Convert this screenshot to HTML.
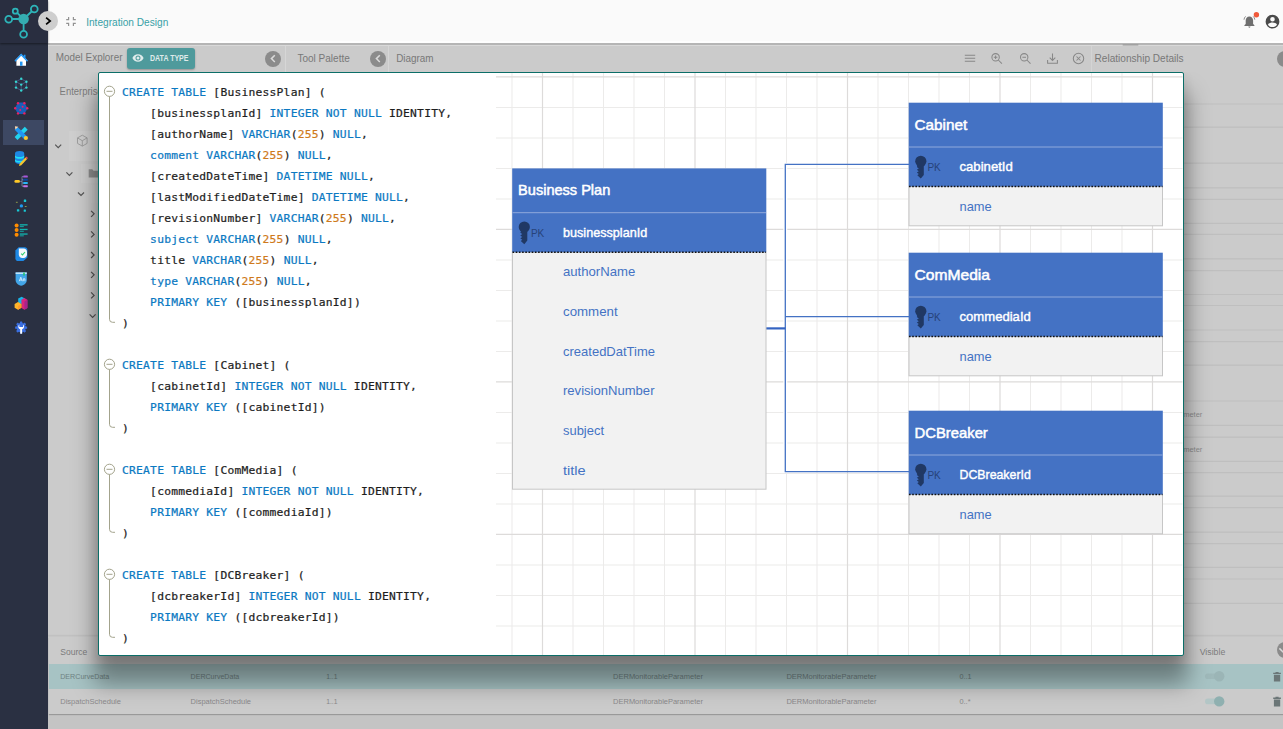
<!DOCTYPE html>
<html lang="en">
<head>
<meta charset="utf-8">
<title>Integration Design</title>
<style>
html,body{margin:0;padding:0}
body{width:1283px;height:729px;overflow:hidden;position:relative;background:#cbcbcb;font-family:"Liberation Sans",sans-serif;color:#777}
.abs{position:absolute}
/* sidebar */
#sidebar{position:absolute;left:0;top:0;width:48px;height:729px;background:#2a3042}
#logo{position:absolute;left:0;top:0;width:48px;height:43px;background:#292e40;box-shadow:0 1px 2px rgba(0,0,0,.45)}
#active{position:absolute;left:3px;top:120px;width:41px;height:25px;background:#3d4863}
/* header */
#header{position:absolute;left:48px;top:0;width:1235px;height:41px;background:#fafafa;border-bottom:2px solid #fefefe;box-shadow:0 2px 0 #b5b5b5,0 3px 0 #d9d9d9}
#toggle{position:absolute;left:38px;top:11px;width:20px;height:20px;border-radius:50%;background:#cecece}
/* content */
#bar{position:absolute;left:48px;top:44px;width:1235px;height:28px;background:#cbcbcb}
.circ{position:absolute;width:16px;height:16px;border-radius:50%;background:#8b8b8b}
/* modal */
#modal{position:absolute;left:98px;top:72px;width:1084px;height:582px;border:1px solid #0b6e68;border-radius:2px;background:#fff;box-shadow:0 24px 22px 4px rgba(0,0,0,.36),0 5px 12px 0 rgba(0,0,0,.12);overflow:hidden}
#code{position:absolute;left:23px;top:9.400px;margin:0;font-family:"DejaVu Sans Mono","Liberation Mono",monospace;font-size:11.3px;letter-spacing:.225px;line-height:21px;color:#1e1e1e;white-space:pre;-webkit-text-stroke:.22px}
#code b{font-weight:normal;color:#0b79c2}
#code i{font-style:normal;color:#cf7a1b}
</style>
</head>
<body>
<div id="content">
<div class="abs" style="left:48px;top:714px;width:1235px;height:15px;background:#c4c4c4"></div>
<div class="abs" style="left:69px;top:131px;width:40px;height:30px;background:#cfcfcf"></div>
<div class="abs" style="left:81px;top:164px;width:30px;height:19px;background:#cecece"></div>
<div class="abs" style="left:91px;top:185px;width:20px;height:18px;background:#cdcdcd"></div>
<div class="abs" style="left:49px;top:637px;width:1234px;height:77px;background:#cbcbcb;box-shadow:0 1px 1px rgba(0,0,0,.22)"></div>
<div class="abs" style="left:49px;top:664px;width:1234px;height:24.500px;background:#a7c3c4"></div>
</div>
<div class="circ" style="left:1276.600px;top:642.400px"></div>
<svg id="bgsvg" class="abs" style="left:0;top:0" width="1283" height="729" viewBox="0 0 1283 729" font-family="Liberation Sans, sans-serif">
<!-- left strip -->
<text x="59.600" y="95.200" font-size="10.400" fill="#7b7b7b" textLength="43" lengthAdjust="spacingAndGlyphs">Enterprise</text>
<g stroke="#9a9a9a" stroke-width=".9" fill="none"><path d="M82.300 135.200l4.800 2.700v5.500l-4.800 2.700-4.800-2.700v-5.500zM82.300 140.700l4.800-2.800M82.300 140.700l-4.800-2.800M82.300 140.700v5.400"/></g>
<path d="M88.700 169.300h3.600l1.200 1.400h6v6.700h-10.800z" fill="#8e8e8e"/>
<g stroke="#555" stroke-width="1.200" fill="none"><path d="M55.200 144.600l3 3 3-3M66.400 172.300l3 3 3-3M78 192.500l3 3 3-3M91.100 210.800l3 3-3 3M91.100 231.400l3 3-3 3M91.100 252l3 3-3 3M91.100 271.800l3 3-3 3M91.100 292.400l3 3-3 3M89.600 314.300l3 3 3-3"/></g>
<!-- right strip rows -->
<path d="M1150 104h133M1150 127.2h133M1150 163.2h133M1150 187.8h133M1150 199.3h133M1150 223.3h133M1150 234.4h133M1150 258.9h133M1150 270.6h133M1150 294.5h133M1150 305.5h133M1150 330h133M1150 341.7h133M1150 365.2h133M1150 401h133M1150 425.3h133M1150 437.1h133M1150 461.4h133M1150 472.7h133M1150 496.2h133M1150 507.7h133M1150 532.2h133M1150 543.6h133M1150 567.4h133M1150 579h133M1150 603.3h133" stroke="#bfbfbf" stroke-width="1.200" fill="none"/>
<path d="M48 635.600h1235" stroke="#c1c1c1" stroke-width="1.800" fill="none"/>
<g font-size="7.800" fill="#8c8c8c">
<text x="1112.500" y="416.600" textLength="89.800" lengthAdjust="spacingAndGlyphs">DERMonitorableParameter</text>
<text x="1112.500" y="452.300" textLength="89.800" lengthAdjust="spacingAndGlyphs">DERMonitorableParameter</text>
</g>
<!-- bottom table -->
<g font-size="9.200" fill="#7c7c7c">
<text x="60.200" y="654.600" textLength="27.100" lengthAdjust="spacingAndGlyphs">Source</text>
<text x="1199.700" y="654.700" textLength="25.600" lengthAdjust="spacingAndGlyphs">Visible</text>
</g>
<g font-size="7.800" fill="#6f8283">
<text x="60.200" y="678.900" textLength="49.100" lengthAdjust="spacingAndGlyphs">DERCurveData</text>
<text x="190.600" y="678.900" textLength="48.700" lengthAdjust="spacingAndGlyphs">DERCurveData</text>
<text x="326.200" y="678.900" textLength="11.300" lengthAdjust="spacingAndGlyphs">1..1</text>
<text x="613.100" y="678.900" textLength="89.800" lengthAdjust="spacingAndGlyphs">DERMonitorableParameter</text>
<text x="786.400" y="678.900" textLength="90.100" lengthAdjust="spacingAndGlyphs">DERMonitorableParameter</text>
<text x="959.500" y="678.900" textLength="12" lengthAdjust="spacingAndGlyphs">0..1</text>
</g>
<g font-size="7.800" fill="#8a888a">
<text x="60.200" y="703.700" textLength="60.800" lengthAdjust="spacingAndGlyphs">DispatchSchedule</text>
<text x="190.600" y="703.700" textLength="60.400" lengthAdjust="spacingAndGlyphs">DispatchSchedule</text>
<text x="326.200" y="703.700" textLength="11.300" lengthAdjust="spacingAndGlyphs">1..1</text>
<text x="613.100" y="703.700" textLength="89.800" lengthAdjust="spacingAndGlyphs">DERMonitorableParameter</text>
<text x="786.400" y="703.700" textLength="90.100" lengthAdjust="spacingAndGlyphs">DERMonitorableParameter</text>
<text x="959.500" y="703.700" textLength="11" lengthAdjust="spacingAndGlyphs">0..*</text>
</g>
<rect x="1205" y="673.500" width="14" height="5.600" rx="2.800" fill="#9fb9ba"/><circle cx="1219.200" cy="676.300" r="5.200" fill="#9bb5b6"/>
<rect x="1205" y="698.600" width="14" height="5.600" rx="2.800" fill="#b3c6c6"/><circle cx="1219.200" cy="701.400" r="5.200" fill="#8fb0b0"/>
<path d="M1273.200 672.800h7.700v1.300h-7.700zM1275.500 672h3.100v.8h-3.100zM1273.900 674.800h6.300v6.800h-6.300zM1273.200 697.600h7.700v1.300h-7.700zM1275.500 696.800h3.100v.8h-3.100zM1273.900 699.600h6.300v6.800h-6.300z" fill="#6b7677"/>
<path d="M1279.400 648.400l3.400 3.400 3.400-3.400" stroke="#dadada" stroke-width="1.500" fill="none"/>
</svg>
<div id="modal">
<svg class="abs" style="left:0;top:0" width="1084" height="582" viewBox="99 73 1084 582" font-family="Liberation Sans, sans-serif">
<path d="M512 73V655M573 73V655M603.5 73V655M634 73V655M664.5 73V655M725.5 73V655M756 73V655M786.5 73V655M817 73V655M878 73V655M908.5 73V655M939 73V655M969.5 73V655M1030.5 73V655M1061 73V655M1091.5 73V655M1122 73V655M496 107.4H1182.5M496 137.9H1182.5M496 168.4H1182.5M496 198.9H1182.5M496 259.9H1182.5M496 290.4H1182.5M496 320.9H1182.5M496 351.4H1182.5M496 412.4H1182.5M496 442.9H1182.5M496 473.4H1182.5M496 503.9H1182.5M496 564.9H1182.5M496 595.4H1182.5M496 625.9H1182.5" stroke="#ecebea" stroke-width="1.05" fill="none"/>
<path d="M542.5 73V655M695 73V655M847.5 73V655M1000 73V655M1152.5 73V655M496 76.9H1182.5M496 229.4H1182.5M496 381.9H1182.5M496 534.4H1182.5" stroke="#dddbda" stroke-width="1.2" fill="none"/>
<g fill="none" stroke="#a3a38c" stroke-width="1"><circle cx="109.500" cy="91.3" r="5.100"/><path d="M106.500 91.3h6M109.500 96.4V319.3q0 3 3 3h2.500"/><circle cx="109.500" cy="364.3" r="5.100"/><path d="M106.500 364.3h6M109.500 369.4V424.3q0 3 3 3h2.500"/><circle cx="109.500" cy="469.3" r="5.100"/><path d="M106.500 469.3h6M109.500 474.4V529.3q0 3 3 3h2.500"/><circle cx="109.500" cy="574.3" r="5.100"/><path d="M106.500 574.3h6M109.500 579.4V634.3q0 3 3 3h2.500"/></g>
<path d="M785.3 163V473" stroke="#fff" stroke-width="4" fill="none"/>
<path d="M785.3 164.4H909M785.3 316.6H909M785.3 471.7H909M785.3 163.8V472.3" stroke="#4472c4" stroke-width="1.3" fill="none"/>
<path d="M766 328.4H785.3" stroke="#3464c2" stroke-width="2.2" fill="none"/>
<rect x="512.5" y="252.2" width="253.5" height="237" fill="#f2f2f2" stroke="#c6c6c6" stroke-width="1"/>
<rect x="512.2" y="168.4" width="254.1" height="83.8" fill="#4472c4"/>
<path d="M512.5 212.7H766" stroke="#8fa9dc" stroke-width="1"/>
<path d="M512.5 252.2H766" stroke="#111" stroke-width="1.5" stroke-dasharray="1.6 1.6"/>
<text x="518.1" y="195.2" font-size="14.3" fill="#fff" stroke="#fff" stroke-width=".5" textLength="92.2" lengthAdjust="spacingAndGlyphs">Business Plan</text>
<circle cx="524.3" cy="227" r="5.6" fill="#203864"/><path d="M521.3 231L527.3 231L527.3 240.6L524.3 244.2L520.8 241L522.3 239.7L520.3 238.3L522.3 236.9L520.3 235.5L522.3 234.1L520.3 232.7Z" fill="#203864"/>
<text x="530.9" y="236.6" font-size="11.4" fill="#27437a" textLength="13.4" lengthAdjust="spacingAndGlyphs">PK</text>
<text x="563" y="236.6" font-size="13.4" fill="#fff" stroke="#fff" stroke-width=".42" textLength="84.2" lengthAdjust="spacingAndGlyphs">businessplanId</text>
<text x="563" y="276.35" font-size="13.4" fill="#4472c4" textLength="72.3" lengthAdjust="spacingAndGlyphs">authorName</text>
<text x="563" y="316.05" font-size="13.4" fill="#4472c4" textLength="54.6" lengthAdjust="spacingAndGlyphs">comment</text>
<text x="563" y="355.75" font-size="13.4" fill="#4472c4" textLength="92" lengthAdjust="spacingAndGlyphs">createdDatTime</text>
<text x="563" y="395.45" font-size="13.4" fill="#4472c4" textLength="91.5" lengthAdjust="spacingAndGlyphs">revisionNumber</text>
<text x="563" y="435.15" font-size="13.4" fill="#4472c4" textLength="41" lengthAdjust="spacingAndGlyphs">subject</text>
<text x="563" y="474.85" font-size="13.4" fill="#4472c4" textLength="22.7" lengthAdjust="spacingAndGlyphs">title</text>
<rect x="909" y="186.5" width="253.5" height="39.3" fill="#f2f2f2" stroke="#c6c6c6" stroke-width="1"/>
<rect x="908.7" y="102.7" width="254.1" height="83.8" fill="#4472c4"/>
<path d="M909 147H1162.5" stroke="#8fa9dc" stroke-width="1"/>
<path d="M909 186.5H1162.5" stroke="#111" stroke-width="1.5" stroke-dasharray="1.6 1.6"/>
<text x="914.6" y="129.5" font-size="14.3" fill="#fff" stroke="#fff" stroke-width=".5" textLength="52.6" lengthAdjust="spacingAndGlyphs">Cabinet</text>
<circle cx="920.8" cy="161.3" r="5.6" fill="#203864"/><path d="M917.8 165.3L923.8 165.3L923.8 174.9L920.8 178.5L917.3 175.3L918.8 174L916.8 172.6L918.8 171.2L916.8 169.8L918.8 168.4L916.8 167Z" fill="#203864"/>
<text x="927.4" y="170.9" font-size="11.4" fill="#27437a" textLength="13.4" lengthAdjust="spacingAndGlyphs">PK</text>
<text x="959.5" y="170.9" font-size="13.4" fill="#fff" stroke="#fff" stroke-width=".42" textLength="53.3" lengthAdjust="spacingAndGlyphs">cabinetId</text>
<text x="959.5" y="211.25" font-size="13.4" fill="#4472c4" textLength="32.2" lengthAdjust="spacingAndGlyphs">name</text>
<rect x="909" y="336.5" width="253.5" height="39.3" fill="#f2f2f2" stroke="#c6c6c6" stroke-width="1"/>
<rect x="908.7" y="252.7" width="254.1" height="83.8" fill="#4472c4"/>
<path d="M909 297H1162.5" stroke="#8fa9dc" stroke-width="1"/>
<path d="M909 336.5H1162.5" stroke="#111" stroke-width="1.5" stroke-dasharray="1.6 1.6"/>
<text x="914.6" y="279.5" font-size="14.3" fill="#fff" stroke="#fff" stroke-width=".5" textLength="75.4" lengthAdjust="spacingAndGlyphs">ComMedia</text>
<circle cx="920.8" cy="311.3" r="5.6" fill="#203864"/><path d="M917.8 315.3L923.8 315.3L923.8 324.9L920.8 328.5L917.3 325.3L918.8 324L916.8 322.6L918.8 321.2L916.8 319.8L918.8 318.4L916.8 317Z" fill="#203864"/>
<text x="927.4" y="320.9" font-size="11.4" fill="#27437a" textLength="13.4" lengthAdjust="spacingAndGlyphs">PK</text>
<text x="959.5" y="320.9" font-size="13.4" fill="#fff" stroke="#fff" stroke-width=".42" textLength="71.3" lengthAdjust="spacingAndGlyphs">commediaId</text>
<text x="959.5" y="361.25" font-size="13.4" fill="#4472c4" textLength="32.2" lengthAdjust="spacingAndGlyphs">name</text>
<rect x="909" y="494.5" width="253.5" height="39.3" fill="#f2f2f2" stroke="#c6c6c6" stroke-width="1"/>
<rect x="908.7" y="410.7" width="254.1" height="83.8" fill="#4472c4"/>
<path d="M909 455H1162.5" stroke="#8fa9dc" stroke-width="1"/>
<path d="M909 494.5H1162.5" stroke="#111" stroke-width="1.5" stroke-dasharray="1.6 1.6"/>
<text x="914.6" y="437.5" font-size="14.3" fill="#fff" stroke="#fff" stroke-width=".5" textLength="73.2" lengthAdjust="spacingAndGlyphs">DCBreaker</text>
<circle cx="920.8" cy="469.3" r="5.6" fill="#203864"/><path d="M917.8 473.3L923.8 473.3L923.8 482.9L920.8 486.5L917.3 483.3L918.8 482L916.8 480.6L918.8 479.2L916.8 477.8L918.8 476.4L916.8 475Z" fill="#203864"/>
<text x="927.4" y="478.9" font-size="11.4" fill="#27437a" textLength="13.4" lengthAdjust="spacingAndGlyphs">PK</text>
<text x="959.5" y="478.9" font-size="13.4" fill="#fff" stroke="#fff" stroke-width=".42" textLength="71.3" lengthAdjust="spacingAndGlyphs">DCBreakerId</text>
<text x="959.5" y="519.25" font-size="13.4" fill="#4472c4" textLength="32.2" lengthAdjust="spacingAndGlyphs">name</text>
</svg>
<pre id="code"><b>CREATE TABLE</b> [BusinessPlan] (
    [businessplanId] <b>INTEGER NOT NULL</b> IDENTITY,
    [authorName] <b>VARCHAR</b>(<i>255</i>) <b>NULL</b>,
    <b>comment VARCHAR</b>(<i>255</i>) <b>NULL</b>,
    [createdDateTime] <b>DATETIME NULL</b>,
    [lastModifiedDateTime] <b>DATETIME NULL</b>,
    [revisionNumber] <b>VARCHAR</b>(<i>255</i>) <b>NULL</b>,
    <b>subject VARCHAR</b>(<i>255</i>) <b>NULL</b>,
    title <b>VARCHAR</b>(<i>255</i>) <b>NULL</b>,
    <b>type VARCHAR</b>(<i>255</i>) <b>NULL</b>,
    <b>PRIMARY KEY</b> ([businessplanId])
)

<b>CREATE TABLE</b> [Cabinet] (
    [cabinetId] <b>INTEGER NOT NULL</b> IDENTITY,
    <b>PRIMARY KEY</b> ([cabinetId])
)

<b>CREATE TABLE</b> [ComMedia] (
    [commediaId] <b>INTEGER NOT NULL</b> IDENTITY,
    <b>PRIMARY KEY</b> ([commediaId])
)

<b>CREATE TABLE</b> [DCBreaker] (
    [dcbreakerId] <b>INTEGER NOT NULL</b> IDENTITY,
    <b>PRIMARY KEY</b> ([dcbreakerId])
)</pre>
</div>
<div id="bar">
<div class="abs" style="left:78.600px;top:4px;width:68.700px;height:20.500px;border-radius:3px;background:#4f9a9c;box-shadow:0 1px 2px rgba(0,0,0,.28)"></div>
<div class="circ" style="left:217.400px;top:6.600px"></div>
<div class="circ" style="left:322.400px;top:6.600px"></div>
<div class="circ" style="left:1228.500px;top:6.600px"></div>
<div class="abs" style="left:237px;top:0;width:1px;height:28px;background:#d6d6d6"></div>
<div class="abs" style="left:340px;top:0;width:1px;height:28px;background:#d6d6d6"></div>
<div class="abs" style="left:1042.500px;top:0;width:1px;height:28px;background:#d4d4d4"></div>
</div>
<div id="header"></div>
<svg id="topsvg" class="abs" style="left:0;top:0" width="1283" height="80" viewBox="0 0 1283 80" font-family="Liberation Sans, sans-serif">
<!-- header -->
<path d="M68.600 17V19.700H66.200M73.400 17V19.700H75.800M66.200 23.400H68.600V26.100M75.800 23.400H73.400V26.100" stroke="#929292" stroke-width="1.200" fill="none"/>
<text x="86.200" y="25.600" font-size="10.500" fill="#38a0a6" textLength="82.100" lengthAdjust="spacingAndGlyphs">Integration Design</text>
<path d="M1249.400 16.600c-2.300 0-3.700 1.700-3.700 4v3.400l-1.300 1.300v.7h10v-.7l-1.300-1.300v-3.400c0-2.300-1.400-4-3.700-4zM1248.300 26.600a1.100 1.100 0 0 0 2.200 0z" fill="#6f6f6f"/>
<path d="M1245.600 16.400c-.9.800-1.500 2-1.600 3.300M1253.200 16.400c.9.800 1.500 2 1.600 3.300" stroke="#6f6f6f" stroke-width=".8" fill="none"/>
<circle cx="1256.400" cy="14.800" r="2.700" fill="#f0593a"/>
<path d="M1272.500 14.800a6.900 6.900 0 1 0 0 13.800 6.900 6.900 0 0 0 0-13.800zm0 2.100a2.300 2.300 0 1 1 0 4.600 2.300 2.300 0 0 1 0-4.600zm0 10.200c-1.900 0-3.500-.9-4.500-2.400.1-1.500 3-2.300 4.500-2.300s4.400.8 4.500 2.300c-1 1.500-2.600 2.400-4.500 2.400z" fill="#4a4a4a" fill-rule="evenodd"/>
<!-- bar -->
<rect x="1122.700" y="44.200" width="15.600" height="1.300" fill="#9c9c9c"/>
<g font-size="10.400" fill="#787878">
<text x="55.800" y="61" textLength="66.700" lengthAdjust="spacingAndGlyphs">Model Explorer</text>
<text x="297.400" y="62" textLength="52.400" lengthAdjust="spacingAndGlyphs">Tool Palette</text>
<text x="396.200" y="62" textLength="37.400" lengthAdjust="spacingAndGlyphs">Diagram</text>
<text x="1094.600" y="61.900" textLength="89" lengthAdjust="spacingAndGlyphs">Relationship Details</text>
</g>
<text x="150" y="61" font-size="8.200" font-weight="bold" fill="#dfeaea" textLength="38.500" lengthAdjust="spacingAndGlyphs">DATA TYPE</text>
<path d="M138 54.200c-2.600 0-4.700 1.600-5.600 3.800.9 2.200 3 3.800 5.600 3.800s4.700-1.600 5.600-3.800c-.9-2.200-3-3.800-5.600-3.800zm0 6.300a2.500 2.500 0 1 1 0-5 2.500 2.500 0 0 1 0 5zm0-4a1.500 1.500 0 1 0 0 3 1.500 1.500 0 0 0 0-3z" fill="#e0ecec"/>
<g stroke="#dadada" stroke-width="1.500" fill="none"><path d="M274.800 55.200l-3.400 3.400 3.400 3.400M379.800 55.200l-3.400 3.400 3.400 3.400"/></g>
<g fill="none" stroke="#888" stroke-width="1.050">
<path d="M964.800 55.300h10.400M964.800 58.300h10.400M964.800 61.300h10.400"/>
<circle cx="995.600" cy="57.300" r="3.700"/><path d="M998.300 60l3.600 3.600M993.800 57.300h3.600M995.600 55.500v3.600"/>
<circle cx="1024.200" cy="57.300" r="3.700"/><path d="M1026.900 60l3.600 3.600M1022.400 57.300h3.600"/>
<path d="M1052.500 53.400v6.800M1049.700 57.600l2.800 2.800 2.800-2.800M1047.600 60v3.200h9.800V60"/>
<circle cx="1078.500" cy="58.500" r="5.200"/><path d="M1076.500 56.500l4 4M1080.500 56.500l-4 4"/>
</g>
</svg>
<div id="sidebar"><div id="logo"></div><div id="active"></div>
<svg class="abs" style="left:0;top:0" width="48" height="729" viewBox="0 0 48 729">
<!-- logo -->
<g stroke="#2db5b9" stroke-width="1.8" fill="none">
<path d="M23.6 19L34.3 9M23.6 19L15.3 11.2M23.6 19H8.7M23.6 19V34.3"/>
<circle cx="34.3" cy="9" r="3.4" fill="#292e40"/><circle cx="15.3" cy="11.2" r="2.5" fill="#292e40"/><circle cx="8.7" cy="19.3" r="3.4" fill="#292e40"/><circle cx="23.6" cy="34.3" r="3.4" fill="#292e40"/>
</g>
<circle cx="23.6" cy="19" r="5.3" fill="#35adb1"/>
<!-- 1 home -->
<path d="M14.8 60.6L21.2 54l6.4 6.6h-1.6v5.2h-9.6v-5.2z" fill="#fff"/>
<path d="M14.4 60.8L21.2 53.6l2.6 2.7v-1.5h1.7v3.3l2.5 2.7-1 .9-5.8-6-5.8 6z" fill="#2196f3"/>
<rect x="20" y="61.6" width="2.5" height="4.2" fill="#2196f3"/>
<!-- 2 cube -->
<g stroke="#4a5a8c" stroke-width=".9" fill="none"><path d="M21.2 78.8l5.2 2.9v5.9l-5.2 2.9-5.2-2.9v-5.9zM21.2 84.6l5.2-2.9M21.2 84.6l-5.2-2.9M21.2 84.6v5.9"/></g>
<g fill="#35d6d0"><circle cx="21.2" cy="78.8" r="1.2"/><circle cx="26.4" cy="81.7" r="1.2"/><circle cx="26.4" cy="87.6" r="1.2"/><circle cx="21.2" cy="90.5" r="1.2"/><circle cx="16" cy="87.6" r="1.2"/><circle cx="16" cy="81.7" r="1.2"/><circle cx="21.2" cy="84.6" r="1.2"/></g>
<!-- 3 hex network -->
<path d="M18 102.6h6.4l3.2 5.7-3.2 5.7H18l-3.2-5.7z" fill="#1a5fb8"/>
<g fill="#ee1f62"><circle cx="18" cy="103.2" r="1.2"/><circle cx="24.4" cy="103.2" r="1.2"/><circle cx="27.2" cy="108.3" r="1.2"/><circle cx="24.4" cy="113.4" r="1.2"/><circle cx="18" cy="113.4" r="1.2"/><circle cx="15.2" cy="108.3" r="1.2"/><circle cx="22.6" cy="106.8" r="1"/><circle cx="20.2" cy="110" r="1"/></g>
<!-- 4 pencil+ruler -->
<path d="M14.600 137l10.200-10.200 2.900 2.900-10.200 10.200z" fill="#22d3ee"/>
<path d="M17.600 126.900l9.800 9.800-2.900 2.900-9.800-9.800z" fill="#2196f3"/>
<path d="M14.900 126.200l3.400.5-2.900 2.900z" fill="#ffd9b0"/>
<circle cx="25.900" cy="138" r="2.100" fill="#ffc928"/>
<!-- 5 database + pencil -->
<path d="M15 153.4c0-1.5 2.1-2.3 4.6-2.3s4.6.8 4.6 2.3v8.2c0 1.5-2.100 2.300-4.600 2.300s-4.600-.8-4.600-2.300z" fill="#1e88e5"/>
<path d="M15 155.600c1 1.100 2.700 1.500 4.600 1.500s3.600-.4 4.600-1.500v1.700c-1 1.100-2.700 1.500-4.600 1.500s-3.600-.4-4.600-1.500zM15 159.400c1 1.100 2.700 1.500 4.600 1.500s3.600-.4 4.600-1.500v1.700c-1 1.100-2.700 1.500-4.600 1.500s-3.600-.4-4.600-1.500z" fill="#20e0f4"/>
<path d="M19.600 163.800l5.800-6.400 1.700 1.500-5.800 6.400-2.300.8z" fill="#f7c52c"/>
<path d="M25.400 157.400l.9-1 1.700 1.500-.9 1z" fill="#ef4a56"/>
<!-- 6 hierarchy -->
<rect x="14.400" y="180" width="5.600" height="2.800" rx="1.400" fill="#ffc928"/>
<path d="M20 181.400h2M22 176.600v9.600M22 176.600h1.500M22 179.800h1.500M22 183h1.500M22 186.200h1.500" stroke="#9aa4c8" stroke-width=".6" fill="none"/>
<rect x="23.200" y="175.600" width="4.600" height="2" rx=".6" fill="#a857d8"/>
<rect x="23.200" y="178.800" width="4.600" height="2" rx=".6" fill="#0d47a1"/>
<rect x="23.200" y="182" width="4.600" height="2" rx=".6" fill="#29b6f6"/>
<rect x="23.200" y="185.200" width="4.600" height="2" rx=".6" fill="#c774e8"/>
<!-- 7 dots -->
<circle cx="21.400" cy="205.900" r="1.700" fill="#1e9bf0"/>
<rect x="23.800" y="199.600" width="2.400" height="2.400" rx=".5" fill="#19c8d4"/><rect x="16.900" y="209.200" width="2.400" height="2.400" rx=".5" fill="#19c8d4"/><rect x="23.700" y="209.600" width="2.200" height="2.200" rx=".5" fill="#19c8d4"/>
<rect x="15.900" y="201.800" width="1.800" height="1" fill="#8d9a4a"/><rect x="24.800" y="206" width="1.800" height="1" fill="#8d9a4a"/>
<!-- 8 list -->
<g fill="#ff8c00"><circle cx="16.600" cy="225.500" r="2"/><circle cx="16.600" cy="230.100" r="2"/><circle cx="16.600" cy="234.700" r="2"/></g>
<g fill="#12b5b0"><rect x="19.800" y="224.200" width="7.800" height="1.300"/><rect x="19.800" y="226.200" width="4" height=".9"/><rect x="19.800" y="228.800" width="7.800" height="1.300"/><rect x="19.800" y="230.800" width="4" height=".9"/><rect x="19.800" y="233.400" width="7.800" height="1.300"/><rect x="19.800" y="235.400" width="4" height=".9"/></g>
<!-- 9 doc check -->
<path d="M15.400 250.600l3.200-3.400h6.200c1.500 0 2.600 1.100 2.600 2.600v7.600l-4 3.600h-5.400c-1.500 0-2.600-1.100-2.600-2.600z" fill="#1e88e5"/>
<path d="M18.800 248.400h4.800c1.900 0 3.400 1.500 3.400 3.400v2.800c0 1.900-1.500 3.400-3.400 3.400h-1.400c-1.900 0-3.400-1.500-3.400-3.400z" fill="#f4f7fb"/>
<path d="M21.200 253.600l1.300 1.300 2.500-2.900" stroke="#2fcf6e" stroke-width="1.100" fill="none"/>
<!-- 10 book -->
<path d="M15.600 272.400h11.200v7.400c0 3.400-2.500 5.400-5.600 6-3.100-.6-5.600-2.600-5.600-6z" fill="#42a5e8"/>
<rect x="15.600" y="272.400" width="11.200" height="1.600" fill="#bfe3fa"/>
<rect x="23.200" y="272.600" width="1.600" height="3" fill="#23c26a"/>
<path d="M19.300 281.200l1.500-4 1.500 4M19.800 280h2M23.300 281.200v-2.400h1.600v2.400" stroke="#e6f4ff" stroke-width=".8" fill="none"/>
<!-- 11 blocks -->
<path d="M18.200 298.600l3.400-1.800 3.400 1.800v3.800l-3.400 1.800-3.400-1.800z" fill="#19b5e8"/>
<path d="M21.400 299.800l3-1.700 3 1.700v8.200l-3 1.700-3-1.700z" fill="#d8267c"/>
<path d="M24.400 301.500l3-1.700v8.200l-3 1.700z" fill="#a8238c"/>
<path d="M14.600 304l3.400-1.900 3.400 1.900v3.800l-3.400 1.900-3.400-1.900z" fill="#ffb52a"/>
<path d="M18 305.900l3.400-1.900v3.800l-3.400 1.900z" fill="#ff9a2e"/>
<!-- 12 gear wrench -->
<g fill="#3b6fe0"><circle cx="21.150" cy="327.600" r="4.700"/><rect x="-1.200" y="-6" width="2.400" height="2.400" rx=".4" transform="translate(21.15 327.6) rotate(0)"/><rect x="-1.200" y="-6" width="2.400" height="2.400" rx=".4" transform="translate(21.15 327.6) rotate(45)"/><rect x="-1.200" y="-6" width="2.400" height="2.400" rx=".4" transform="translate(21.15 327.6) rotate(90)"/><rect x="-1.200" y="-6" width="2.400" height="2.400" rx=".4" transform="translate(21.15 327.6) rotate(135)"/><rect x="-1.200" y="-6" width="2.400" height="2.400" rx=".4" transform="translate(21.15 327.6) rotate(180)"/><rect x="-1.200" y="-6" width="2.400" height="2.400" rx=".4" transform="translate(21.15 327.6) rotate(225)"/><rect x="-1.200" y="-6" width="2.400" height="2.400" rx=".4" transform="translate(21.15 327.6) rotate(270)"/><rect x="-1.200" y="-6" width="2.400" height="2.400" rx=".4" transform="translate(21.15 327.6) rotate(315)"/></g>
<path d="M19.300 324.600a2.700 2.700 0 0 0 .9 4.700v4.400h1.900v-4.400a2.700 2.700 0 0 0 .9-4.700v2.500h-3.700z" fill="#fff"/>
</svg>
</div>
<div id="toggle"><svg width="20" height="20" viewBox="0 0 20 20"><path d="M8.100 6.600L12.200 10l-4.100 3.400" stroke="#000" stroke-width="1.700" fill="none"/></svg></div>
</body>
</html>
